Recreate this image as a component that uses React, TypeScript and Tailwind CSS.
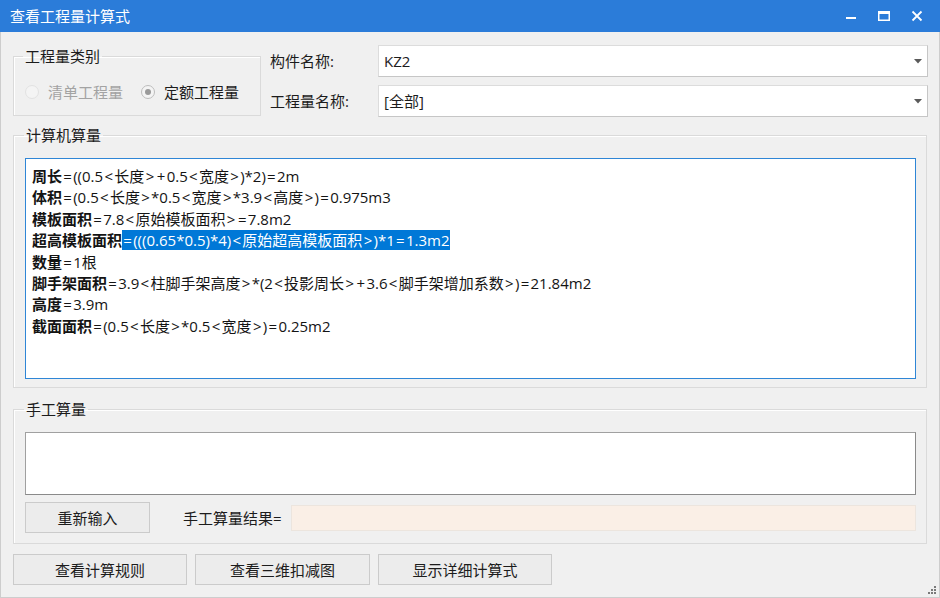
import React from 'react';

// Legacy "view quantity formula" dialog, drawn at 940x598.
const font = "font-['Open_Sans','Noto_Sans_CJK_SC',sans-serif]";

function Radio({ label, checked, disabled }: { label: string; checked?: boolean; disabled?: boolean }) {
  return (
    <div className="flex items-center">
      <span
        className={`flex h-[14px] w-[14px] items-center justify-center rounded-full border bg-[#f4f4f4] ${
          checked ? 'border-[#bdbdbd]' : 'border-[#e2e2e2]'
        }`}
      >
        {checked && <span className="h-[6px] w-[6px] rounded-full bg-[#9a9a9a]" />}
      </span>
      <span className={`ml-[9px] text-[15px] leading-[20px] ${disabled ? 'text-[#a3a3a3]' : 'text-[#1c1c1c]'}`}>{label}</span>
    </div>
  );
}

function Combo({ value }: { value: string }) {
  return (
    <div className="flex h-[32px] w-[550px] items-center justify-between border border-[#dcdcdc] border-b-[#c6c6c6] border-r-[#c6c6c6] bg-white pl-[5px] pr-[5px]">
      <span className="text-[15px] leading-[20px] text-[#1c1c1c]">{value}</span>
      <svg width="8" height="5" viewBox="0 0 8 5">
        <path d="M0 0 H8 L4 4.5 Z" fill="#5a5a5a" />
      </svg>
    </div>
  );
}

function Btn({ label, w }: { label: string; w: string }) {
  return (
    <button
      className={`flex h-[31px] ${w} items-center justify-center border border-[#cbcbcb] bg-[#ececec] text-[15px] leading-[20px] text-[#1c1c1c]`}
    >
      {label}
    </button>
  );
}

// math signs are wider in the original UI font, so pad them a little
function Formula({ text }: { text: string }) {
  return (
    <>
      {text.split(/([<>=+])/).map((part, i) =>
        /^[<>=+]$/.test(part) ? (
          <span key={i} className="px-[1.3px]">
            {part}
          </span>
        ) : (
          <React.Fragment key={i}>{part}</React.Fragment>
        )
      )}
    </>
  );
}

const lines: { k: string; v: string; sel?: boolean }[] = [
  { k: '周长', v: '=((0.5<长度>+0.5<宽度>)*2)=2m' },
  { k: '体积', v: '=(0.5<长度>*0.5<宽度>*3.9<高度>)=0.975m3' },
  { k: '模板面积', v: '=7.8<原始模板面积>=7.8m2' },
  { k: '超高模板面积', v: '=(((0.65*0.5)*4)<原始超高模板面积>)*1=1.3m2', sel: true },
  { k: '数量', v: '=1根' },
  { k: '脚手架面积', v: '=3.9<柱脚手架高度>*(2<投影周长>+3.6<脚手架增加系数>)=21.84m2' },
  { k: '高度', v: '=3.9m' },
  { k: '截面面积', v: '=(0.5<长度>*0.5<宽度>)=0.25m2' },
];

export default function App() {
  return (
    <div className={`flex h-[598px] w-[940px] flex-col bg-[#f0f0f0] ${font}`}>
      {/* Title bar */}
      <div className="flex h-[32px] shrink-0 items-center justify-between bg-[#2b7cd9] pl-[10px] pr-[17px]">
        <span className="text-[15px] leading-[20px] text-white">查看工程量计算式</span>
        <div className="flex items-center gap-[21px]">
          <svg width="12" height="12" viewBox="0 0 12 12">
            <rect x="1" y="7" width="10" height="2" fill="white" />
          </svg>
          <svg width="12" height="12" viewBox="0 0 12 12">
            <rect x="0.75" y="1.75" width="10.5" height="8.5" fill="none" stroke="white" strokeWidth="1.5" />
            <rect x="0.5" y="1.5" width="11" height="2.5" fill="white" />
          </svg>
          <svg width="12" height="12" viewBox="0 0 12 12">
            <path d="M1.5 1.5 L10.5 10.5 M10.5 1.5 L1.5 10.5" stroke="white" strokeWidth="1.8" />
          </svg>
        </div>
      </div>

      {/* Body */}
      <div className="relative flex flex-1 flex-col border-x border-b border-[#cdcdcd] pl-[12px] pt-[13px]">
        {/* Top row */}
        <div className="flex h-[72px] items-start">
          <fieldset className="mt-[3px] h-[68px] w-[248px] border border-[#dadada] shadow-[inset_1px_1px_0_#fff]">
            <legend className="ml-[9px] px-[2px] text-[15px] leading-[17px] text-[#1c1c1c]">工程量类别</legend>
            <div className="flex items-center gap-[18px] pl-[11px] pt-[17px]">
              <Radio label="清单工程量" disabled />
              <Radio label="定额工程量" checked />
            </div>
          </fieldset>
          <div className="ml-[9px] flex flex-col gap-[8px]">
            <div className="flex items-center">
              <span className="w-[108px] text-[15px] leading-[20px] text-[#1c1c1c]">构件名称:</span>
              <Combo value="KZ2" />
            </div>
            <div className="flex items-center">
              <span className="w-[108px] text-[15px] leading-[20px] text-[#1c1c1c]">工程量名称:</span>
              <Combo value="[全部]" />
            </div>
          </div>
        </div>

        {/* Computer quantity */}
        <fieldset className="mt-[10px] h-[261px] w-[914px] border border-[#dadada] shadow-[inset_1px_1px_0_#fff]">
          <legend className="ml-[10px] px-[2px] text-[15px] leading-[17px] text-[#1c1c1c]">计算机算量</legend>
          <div className="ml-[11px] mt-[14px] h-[221px] w-[891px] border border-[#2f86d6] bg-white pl-[6px] pt-[7px]">
            {lines.map((l) => (
              <div key={l.k} className="whitespace-nowrap text-[15px] leading-[21.4px] text-[#141414]">
                <span className="font-bold">{l.k}</span>
                <span className={l.sel ? 'bg-[#0078d7] text-white' : ''}>
                  <Formula text={l.v} />
                </span>
              </div>
            ))}
          </div>
        </fieldset>

        {/* Manual quantity */}
        <fieldset className="mt-[13px] h-[143px] w-[914px] border border-[#dadada] shadow-[inset_1px_1px_0_#fff]">
          <legend className="ml-[10px] px-[2px] text-[15px] leading-[17px] text-[#1c1c1c]">手工算量</legend>
          <div className="ml-[11px] mt-[14px] h-[63px] w-[891px] border border-[#8a8a8a] border-l-[#a0a0a0] border-t-[#a0a0a0] bg-white" />
          <div className="ml-[11px] mt-[7px] flex items-center">
            <Btn label="重新输入" w="w-[125px]" />
            <span className="ml-[33px] w-[108px] text-[15px] leading-[20px] text-[#1c1c1c]">手工算量结果=</span>
            <div className="h-[26px] w-[625px] border border-[#ece5de] bg-[#faefe6]" />
          </div>
        </fieldset>

        {/* Bottom buttons */}
        <div className="mt-[10px] flex gap-[8px]">
          <Btn label="查看计算规则" w="w-[174px]" />
          <Btn label="查看三维扣减图" w="w-[175px]" />
          <Btn label="显示详细计算式" w="w-[174px]" />
        </div>

        {/* Resize grip */}
        <svg className="absolute bottom-[2px] right-[2px]" width="10" height="10" viewBox="0 0 10 10">
          <rect x="7" y="1" width="2" height="2" fill="#7a7a7a" />
          <rect x="4" y="4" width="2" height="2" fill="#7a7a7a" />
          <rect x="7" y="4" width="2" height="2" fill="#7a7a7a" />
          <rect x="1" y="7" width="2" height="2" fill="#7a7a7a" />
          <rect x="4" y="7" width="2" height="2" fill="#7a7a7a" />
          <rect x="7" y="7" width="2" height="2" fill="#7a7a7a" />
        </svg>
      </div>
    </div>
  );
}
